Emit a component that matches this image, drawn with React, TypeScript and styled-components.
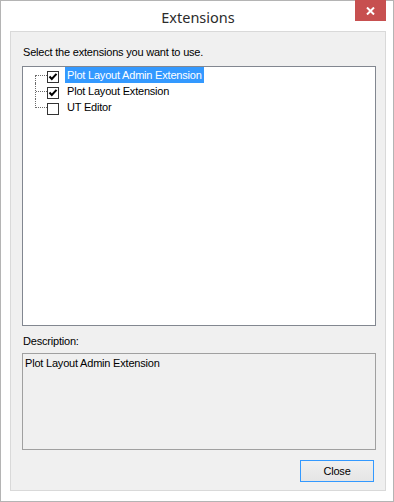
import styled, { createGlobalStyle } from 'styled-components'

const extensions = [
  { name: 'Plot Layout Admin Extension', checked: true },
  { name: 'Plot Layout Extension', checked: true },
  { name: 'UT Editor', checked: false },
]

const selected = 0

export default function App() {
  return (
    <>
      <GlobalStyle />
      <Window>
        <TitleBar>
          <span />
          <Title>Extensions</Title>
          <CloseX aria-label='Close'>
            <svg width='9' height='8' viewBox='0 0 9 8'>
              <path d='M1 0.5 L8 7.5 M8 0.5 L1 7.5' stroke='#fff' strokeWidth='2' fill='none' />
            </svg>
          </CloseX>
        </TitleBar>
        <Client>
          <Label>Select the extensions you want to use.</Label>
          <TreeBox>
            {extensions.map((ext, i) => (
              <Row key={ext.name}>
                <Branch $first={i === 0} $last={i === extensions.length - 1} />
                <CheckBox checked={ext.checked} />
                <ItemText $selected={i === selected}>{ext.name}</ItemText>
              </Row>
            ))}
          </TreeBox>
          <DescLabel>Description:</DescLabel>
          <DescBox>{extensions[selected].name}</DescBox>
          <Footer>
            <Button>Close</Button>
          </Footer>
        </Client>
      </Window>
    </>
  )
}

function CheckBox({ checked }: { checked: boolean }) {
  return (
    <Box width='12' height='12' viewBox='0 0 12 12'>
      <rect x='0.5' y='0.5' width='11' height='11' fill='#fff' stroke='#333' />
      {checked && (
        <path d='M2.5 5.5 L4.8 8 L9.5 2.8' stroke='#000' strokeWidth='2' fill='none' />
      )}
    </Box>
  )
}

const GlobalStyle = createGlobalStyle`
  html, body {
    margin: 0;
    padding: 0;
    background: #fff;
  }
  body {
    font-family: "Liberation Sans", Arial, sans-serif;
    font-size: 11px;
    letter-spacing: -0.2px;
    color: #000;
  }
`

const Window = styled.div`
  box-sizing: border-box;
  width: 394px;
  height: 502px;
  border: 1px solid #b4b4b4;
  background: #fff;
  padding: 0 7px 10px 9px;
  display: flex;
  flex-direction: column;
`

const TitleBar = styled.div`
  height: 30px;
  display: grid;
  grid-template-columns: 1fr auto 1fr;
  align-items: start;
`

const Title = styled.div`
  font-family: "Noto Sans", "Open Sans", sans-serif;
  font-size: 14.5px;
  letter-spacing: 0;
  color: #2b2b2b;
  line-height: 20px;
  padding-top: 6px;
`

const CloseX = styled.button`
  justify-self: end;
  width: 31px;
  height: 21px;
  margin-top: -1px;
  border: none;
  padding: 0;
  background: #c75050;
  display: flex;
  align-items: center;
  justify-content: center;
`

const Client = styled.div`
  flex: 1;
  border: 1px solid #d9d9d9;
  background: #f0f0f0;
  padding: 14px 9px 8px 11px;
  display: flex;
  flex-direction: column;
  min-height: 0;
`

const Label = styled.div`
  line-height: 13px;
  height: 13px;
  padding-left: 1px;
`

const TreeBox = styled.div`
  margin-top: 7px;
  flex: 1;
  background: #fff;
  border: 1px solid #828790;
  padding: 0 0 0 12px;
`

const Row = styled.div`
  display: flex;
  align-items: flex-start;
  height: 16px;
`

const Branch = styled.div<{ $first: boolean; $last: boolean }>`
  position: relative;
  width: 12px;
  height: 16px;
  flex: none;
  &::before {
    content: '';
    position: absolute;
    left: 0;
    top: ${(p) => (p.$first ? '8px' : '0')};
    height: ${(p) => (p.$last ? '9px' : p.$first ? '8px' : '16px')};
    border-left: 1px dotted #6a6a6a;
  }
  &::after {
    content: '';
    position: absolute;
    left: 1px;
    right: 0;
    top: 8px;
    border-top: 1px dotted #6a6a6a;
  }
`

const Box = styled.svg`
  flex: none;
  margin-top: 4px;
  display: block;
`

const ItemText = styled.span<{ $selected: boolean }>`
  margin-left: 6px;
  padding: 0 2px;
  line-height: 16px;
  height: 16px;
  white-space: nowrap;
  background: ${(p) => (p.$selected ? '#3399ff' : 'transparent')};
  color: ${(p) => (p.$selected ? '#fff' : '#000')};
`

const DescLabel = styled.div`
  margin-top: 9px;
  line-height: 13px;
  height: 13px;
  padding-left: 1px;
`

const DescBox = styled.div`
  margin-top: 5px;
  height: 92px;
  border: 1px solid #a0a0a0;
  background: #f0f0f0;
  padding: 3px 2px 0;
  line-height: 13px;
`

const Footer = styled.div`
  margin-top: 10px;
  display: flex;
  justify-content: flex-end;
  padding-right: 2px;
`

const Button = styled.button`
  box-sizing: border-box;
  width: 74px;
  height: 22px;
  border: 1px solid #3399ff;
  background: linear-gradient(#f0f0f0, #e5e5e5);
  font-family: "Liberation Sans", Arial, sans-serif;
  font-size: 11px;
  letter-spacing: -0.2px;
  color: #000;
  padding: 0;
`
